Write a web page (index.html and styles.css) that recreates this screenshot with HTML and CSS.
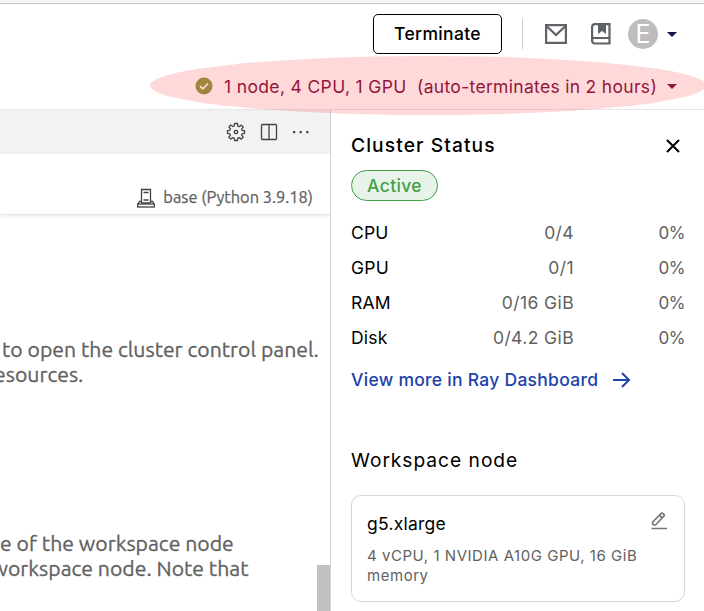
FILE: index.html
```html
<!DOCTYPE html>
<html lang="en">
<head>
<meta charset="utf-8">
<title>Workspace</title>
<link rel="stylesheet" href="styles.css">
</head>
<body>
<div class="app">
  <header class="header">
    <div class="toolbar">
      <button class="terminate"><span>Terminate</span></button>
      <i class="divider"></i>
      <svg class="mail" width="22" height="20" viewBox="0 0 22 20" fill="none" stroke="#5f6368" stroke-width="2.200"><rect x="1.100" y="1.100" width="19.800" height="17.800"/><path d="M2 2.500L11 11L20 2.500"/></svg>
      <svg class="book" width="20" height="22" viewBox="0 0 20 22"><path d="M4 1.100H18.500V20.500H4A3 3 0 0 1 1.100 17.500V4A3 3 0 0 1 4 1.100Z" fill="none" stroke="#5f6368" stroke-width="2.200"/><path d="M1 17.500A2 2 0 0 1 3.500 15H18.500" fill="none" stroke="#5f6368" stroke-width="2.200"/><path d="M7 1H15V11L11 8L7 11Z" fill="#5f6368"/></svg>
      <span class="avatar">E</span>
      <i class="caret"></i>
    </div>
    <div class="status">
      <svg width="18" height="18" viewBox="0 0 18 18"><circle cx="9" cy="9" r="8.500" fill="#a0863c"/><path d="M5 9.200L7.800 11.800L13 6.500" fill="none" stroke="#ffdada" stroke-width="1.700"/></svg>
      <span class="summary">1 node, 4 CPU, 1 GPU</span>
      <span class="auto">(auto-terminates in 2 hours)</span>
      <i class="caret red"></i>
    </div>
  </header>
  <main class="body">
    <section class="editor">
      <div class="tabs">
        <svg width="20" height="20" viewBox="0 0 20 20" fill="none" stroke="#424242" stroke-width="1.300" stroke-linejoin="round"><path d="M8.600 1.500H11.400L11.800 4.100L13.200 4.700L15.300 3.100L17.200 5L15.700 7.100L16.200 8.400L18.500 8.700V11.400L16.200 11.800L15.600 13.200L17.100 15.200L15.200 17.100L13.100 15.600L11.800 16.200L11.400 18.500H8.600L8.200 16.200L6.800 15.600L4.800 17.100L2.900 15.200L4.400 13.200L3.800 11.800L1.500 11.400V8.700L3.800 8.300L4.400 6.900L2.900 4.900L4.800 3L6.800 4.500L8.200 4Z"/><circle cx="10" cy="10" r="1.700"/></svg>
        <svg width="18" height="18" viewBox="0 0 18 18" fill="none" stroke="#424242" stroke-width="1.300"><rect x="1.500" y="1.500" width="15" height="15" rx="1"/><path d="M9 1.500V16.500"/></svg>
        <svg width="18" height="18" viewBox="0 0 18 18" fill="#424242"><rect x="1" y="8" width="2.200" height="2.200"/><rect x="7.600" y="8" width="2.200" height="2.200"/><rect x="14.200" y="8" width="2.200" height="2.200"/></svg>
      </div>
      <div class="kernel">
        <svg width="18" height="20" viewBox="0 0 18 20" fill="none" stroke="#424242" stroke-width="1.300"><path d="M4.500 15V1.500H13.500V15M6.500 4.500H11.500M6.500 12H11.500M4.500 13.500H2.500L1 16M13.500 13.500H15.500L17 16M4.500 15H13.500"/><rect x=".7" y="16" width="16.600" height="3"/></svg>
        <span>base (Python 3.9.18)</span>
      </div>
      <div class="document">
        <p class="line l1">to open the cluster control panel.</p>
        <p class="line l2">esources.</p>
        <p class="line l3">e of the workspace node</p>
        <p class="line l4">workspace node. Note that</p>
        <i class="scroll"></i>
      </div>
    </section>
    <aside class="panel">
      <div class="heading"><h2>Cluster Status</h2>
        <svg width="14" height="14" viewBox="0 0 14 14" stroke="#000" stroke-width="2"><path d="M1 1L13 13M13 1L1 13"/></svg></div>
      <div class="active"><span>Active</span></div>
      <div class="metrics">
        <div class="metric"><b>CPU</b><span>0/4</span><span class="percent">0%</span></div>
        <div class="metric"><b>GPU</b><span>0/1</span><span class="percent">0%</span></div>
        <div class="metric"><b>RAM</b><span>0/16 GiB</span><span class="percent">0%</span></div>
        <div class="metric"><b>Disk</b><span>0/4.2 GiB</span><span class="percent">0%</span></div>
      </div>
      <a class="link"><span>View more in Ray Dashboard</span><svg width="18" height="16" viewBox="0 0 18 16" fill="none" stroke="#2142ab" stroke-width="2"><path d="M0 8H16M9 1L16 8L9 15"/></svg></a>
      <h2 class="node-title"><span>Workspace node</span></h2>
      <div class="card">
        <div class="card-head"><span class="name">g5.xlarge</span>
          <svg width="17" height="18" viewBox="0 0 17 18" fill="none" stroke="#757575" stroke-width="1.700"><path d="M1.700 13V10L10.300 1.400Q11 .8 11.700 1.400L13 2.700Q13.600 3.300 13 4L4.400 13H1.700M8.500 3.200L11.200 6M.5 16.500H16"/></svg></div>
        <p class="spec">4 vCPU, 1 NVIDIA A10G GPU, 16 GiB<br>memory</p>
      </div>
    </aside>
  </main>
  <i class="highlight"></i>
</div>
</body>
</html>
```

FILE: styles.css
```css
* { box-sizing: border-box; }
body { margin: 0; background: #fff; font-family: Inter, "Liberation Sans", sans-serif; }
h2, p { margin: 0; font-weight: 400; }
.app { position: relative; width: 704px; height: 611px; overflow: hidden; display: flex; flex-direction: column; }
.header { height: 110px; flex: none; border-top: 3px solid #f5f5f5; border-bottom: 1px solid #e5e6ea; }
.toolbar { height: 61px; border-top: 1px solid #c3c3c3; display: flex; align-items: center; justify-content: flex-end; padding-right: 27px; }
.terminate { width: 129px; height: 40px; border: 1px solid #000; border-radius: 5px; background: #fff; padding: 0; font: 500 17.500px/38px Inter, sans-serif; letter-spacing: .33px; color: #000; }
.divider { width: 1px; height: 30px; background: #c9cbd1; margin: 0 22px 0 20px; }
.mail { margin-right: 24px; }
.book { margin-right: 17px; }
.avatar { width: 30px; height: 30px; border-radius: 50%; background: #bdbdbd; color: #fff; font-size: 25px; line-height: 30px; text-align: center; }
.caret { width: 0; height: 0; border: 5px solid transparent; border-top-color: #0b174a; border-bottom: 0; margin-left: 9px; }
.status { position: relative; z-index: 3; height: 44px; display: flex; align-items: center; padding-left: 195px; color: #94153b; font-size: 17.500px; white-space: nowrap; }
.summary { margin-left: 11px; letter-spacing: .35px; width: 183px; }
.auto { margin-left: 10px; letter-spacing: .31px; width: 240px; }
.status .red { border-top-color: #94153b; margin-left: 10px; }
.highlight { position: absolute; z-index: 2; left: 150px; top: 56px; width: 556px; height: 59px; border-radius: 50%; background: rgba(255, 0, 0, .15); pointer-events: none; }
.body { flex: 1; min-height: 0; display: grid; grid-template-columns: 330px 374px; }
.editor { display: flex; flex-direction: column; min-width: 0; overflow: hidden; }
.tabs { height: 44px; background: #f2f2f2; display: flex; align-items: center; justify-content: flex-end; gap: 14px; padding-right: 20px; }
.kernel { height: 61px; border-bottom: 1px solid #e7e7e7; box-shadow: 0 2px 3px #f0f0f0; display: flex; justify-content: flex-end; gap: 8px; padding: 34px 17px 0 0; color: #616161; font: 16.400px/18px Ubuntu, "Noto Sans", sans-serif; white-space: nowrap; flex: none; -webkit-text-stroke: .25px #616161; }
.document { flex: 1; display: grid; grid-template-columns: 317px 13px; grid-template-rows: 147px 25px 169px 25px 1fr; color: #616161; font: 21.200px/25px Ubuntu, "Noto Sans", sans-serif; -webkit-text-stroke: .3px #616161; }
.line { grid-column: 1; white-space: nowrap; }
.l1 { grid-row: 1; align-self: end; padding-left: 2px; }
.l2 { grid-row: 2; margin-left: -6px; }
.l3 { grid-row: 3; align-self: end; }
.l4 { grid-row: 4; margin-left: -8.500px; }
.scroll { grid-column: 2; grid-row: 4 / 6; background: #c1c1c1; margin-top: 9px; }
.panel { border-left: 1px solid #ccd6e5; padding: 20px 19px 0 20px; }
.heading { height: 31px; display: flex; align-items: center; justify-content: space-between; padding-right: 5.500px; }
h2 { font-size: 19.200px; line-height: 30px; }
.heading h2 { font-weight: 500; letter-spacing: 1.100px; margin-top: -1px; }
.active { margin-top: 9px; width: 87px; height: 31px; border: 1px solid #43a047; border-radius: 16px; background: #e8f3e9; color: #43a047; font-size: 17.500px; font-weight: 500; line-height: 29px; text-align: center; letter-spacing: .35px; }
.metrics { margin-top: 14px; font-size: 17.500px; letter-spacing: .2px; }
.metric { height: 35px; display: grid; grid-template-columns: 80px 143px 111px; align-items: center; color: #616161; }
.metric b { color: #000; font-weight: 400; }
.metric span { text-align: right; letter-spacing: .4px; }
.metric .percent { font-size: 17px; letter-spacing: -.5px; }
.link { margin-top: 9px; height: 31px; display: flex; align-items: center; color: #2142ab; font-size: 17.500px; font-weight: 500; letter-spacing: .28px; white-space: nowrap; }
.link span { width: 262px; }
.node-title { margin-top: 50px; letter-spacing: .97px; }
.card { margin-top: 20px; height: 107px; border: 1px solid #d0d9e2; border-radius: 10px; padding: 15px; }
.card-head { height: 26px; display: flex; justify-content: space-between; }
.name { font-size: 17.500px; line-height: 26px; letter-spacing: .25px; }
.card-head svg { margin: 1px 1px 0 0; }
.spec { margin-top: 9px; font-size: 15px; line-height: 20px; letter-spacing: .54px; color: #616161; white-space: nowrap; }
```
